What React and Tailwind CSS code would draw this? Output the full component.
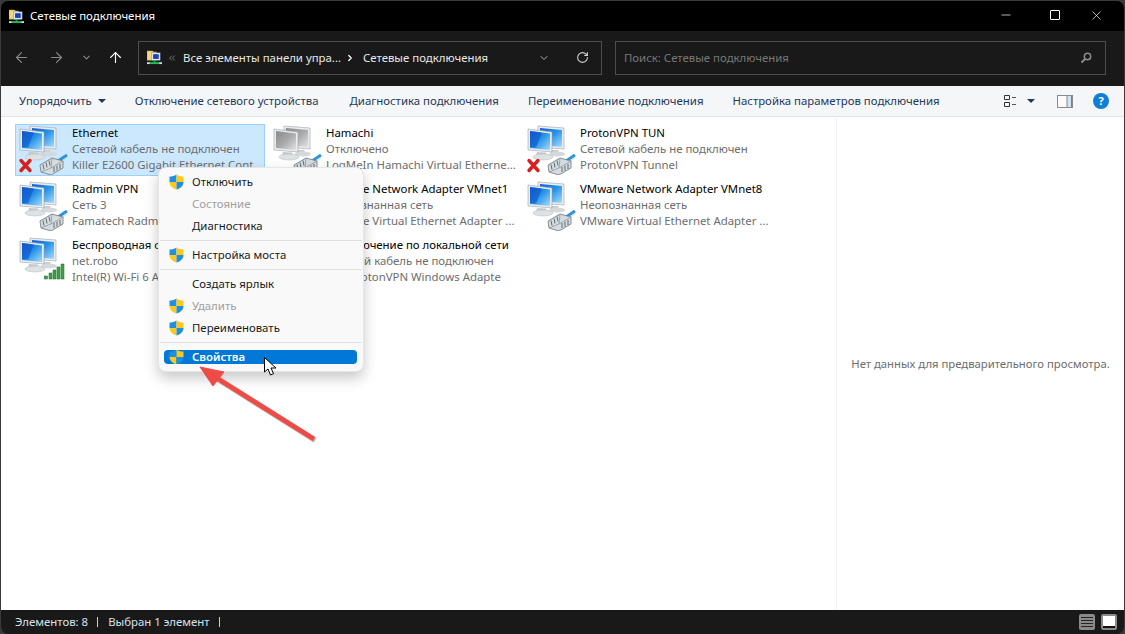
import React from 'react';
import { ArrowLeft, ArrowRight, ArrowUp, ChevronDown, ChevronRight, ChevronsLeft, RotateCw, Minus, X } from 'lucide-react';

const items = [
  { name: 'Ethernet', status: 'Сетевой кабель не подключен', device: 'Killer E2600 Gigabit Ethernet Cont...', badge: 'x', selected: true },
  { name: 'Hamachi', status: 'Отключено', device: 'LogMeIn Hamachi Virtual Etherne...', badge: 'cable', gray: true },
  { name: 'ProtonVPN TUN', status: 'Сетевой кабель не подключен', device: 'ProtonVPN Tunnel', badge: 'x' },
  { name: 'Radmin VPN', status: 'Сеть 3', device: 'Famatech Radmin VPN Ethernet Ad...', badge: 'plain' },
  { name: 'VMware Network Adapter VMnet1', status: 'Неопознанная сеть', device: 'VMware Virtual Ethernet Adapter ...', badge: 'plain' },
  { name: 'VMware Network Adapter VMnet8', status: 'Неопознанная сеть', device: 'VMware Virtual Ethernet Adapter ...', badge: 'plain' },
  { name: 'Беспроводная сеть', status: 'net.robo', device: 'Intel(R) Wi-Fi 6 AX201 160MHz', badge: 'wifi' },
  { name: 'Подключение по локальной сети', status: 'Сетевой кабель не подключен', device: 'TAP-ProtonVPN Windows Adapte', badge: 'x' },
];

const menu = [
  { label: 'Отключить', shield: true },
  { label: 'Состояние', disabled: true },
  { label: 'Диагностика' },
  { sep: true },
  { label: 'Настройка моста', shield: true },
  { sep: true },
  { label: 'Создать ярлык' },
  { label: 'Удалить', shield: true, disabled: true },
  { label: 'Переименовать', shield: true },
  { sep: true },
  { label: 'Свойства', shield: true, active: true },
];

function Monitor({ points, screen, fill }) {
  return (
    <g>
      <polygon points={points} fill="#e9edf0" stroke="#9aa3a8" strokeWidth="0.6" />
      <polygon points={screen} fill={fill} />
    </g>
  );
}

function CableBadge() {
  return (
    <g>
      <path d="M42 36l9-6" stroke="#2f93d6" strokeWidth="3" />
      <path d="M44 38l7-5" stroke="#bfe3f7" strokeWidth="1" />
      <path d="M24 40l12-7 11 3v7l-12 7-10-3z" fill="#d5dce0" stroke="#77848b" strokeWidth="0.9" strokeLinejoin="round" />
      <path d="M36 33l-1 10-10 4M35 43l12-7" fill="none" stroke="#8b979d" strokeWidth="0.8" />
      <path d="M27 39.500l1 5M30 37.500l1 5M33 35.500l1 5M38 42v5M41 40.500v5M44 39v5" stroke="#5f6c73" strokeWidth="1" />
    </g>
  );
}

function NetIcon({ badge, gray }) {
  const id = gray ? 'screenGray' : 'screenBlue';
  return (
    <svg width="52" height="50" viewBox="0 0 52 50" className="shrink-0">
      <defs>
        <linearGradient id="screenBlue" x1="0" y1="0" x2="1" y2="1">
          <stop offset="0" stopColor="#1a5fd0" />
          <stop offset="0.45" stopColor="#1f8fe8" />
          <stop offset="1" stopColor="#a5dcf8" />
        </linearGradient>
        <linearGradient id="screenGray" x1="0" y1="0" x2="1" y2="1">
          <stop offset="0" stopColor="#8a8a8a" />
          <stop offset="0.5" stopColor="#a8a8a8" />
          <stop offset="1" stopColor="#e2e2e2" />
        </linearGradient>
      </defs>
      <Monitor points="14,1 40,3 40,24 14,22" screen="16,3 38,5 38,22 16,20" fill={`url(#${id})`} />
      <path d="M27 25l7 0 2 4-9 0z" fill="#c9ced1" />
      <ellipse cx="33" cy="29" rx="8" ry="2.500" fill="#d5d9db" />
      <Monitor points="4,4 28,7 28,27 4,25" screen="6,6 26,8.500 26,25 6,23" fill={`url(#${id})`} />
      <path d="M6 6l12 1.500-6 15-6-.5z" fill="#0f4fc4" opacity={gray ? 0 : 0.55} />
      <path d="M13 27l9 .5 1 3-11 0z" fill="#c4cacd" />
      <ellipse cx="19" cy="32" rx="10" ry="3" fill="#dde1e3" stroke="#b4babd" strokeWidth="0.5" />
      {badge === 'x' && (
        <>
          <CableBadge />
          <path d="M5 35.500l9 10M14 35.500l-9 10" stroke="#d81e1e" strokeWidth="3.400" strokeLinecap="round" />
        </>
      )}
      {(badge === 'cable' || badge === 'plain') && <CableBadge />}
      {badge === 'wifi' && (
        <g fill="#3fa14a" stroke="#1e6b2a" strokeWidth="0.5">
          <rect x="28.500" y="39" width="3" height="3" />
          <rect x="33" y="36" width="3" height="6" />
          <rect x="37" y="33" width="3" height="9" />
          <rect x="41" y="30" width="3" height="12" />
          <rect x="45" y="27" width="3" height="15" />
        </g>
      )}
    </svg>
  );
}

function Shield() {
  return (
    <svg width="15" height="16" viewBox="0 0 15 16" className="shrink-0">
      <path d="M7.500 0.500C5.500 2 3 2.500 0.500 2.500V8h7z" fill="#1f8fe0" />
      <path d="M7.500 0.500C9.500 2 12 2.500 14.500 2.500V8h-7z" fill="#fbc81e" />
      <path d="M0.500 8c0 3.500 3 6.500 7 7.500V8z" fill="#fbc81e" />
      <path d="M14.500 8c0 3.500-3 6.500-7 7.500V8z" fill="#1f8fe0" />
    </svg>
  );
}

function AppIcon() {
  return (
    <svg width="15" height="15" viewBox="0 0 16 16" className="shrink-0">
      <path d="M0 1h6l1 1h3v9H0z" fill="#f3d77c" stroke="#b79a45" strokeWidth="0.5" />
      <rect x="5" y="3" width="9" height="8" fill="#dfe6f5" stroke="#6f7fb0" strokeWidth="0.5" />
      <rect x="6.500" y="4.500" width="6" height="5" fill="#1c3fb0" />
      <rect x="7" y="11" width="2" height="2" fill="#16a34a" />
      <rect x="3" y="13" width="10" height="2" fill="#22c05a" />
      <rect x="0" y="13" width="3" height="2" fill="#d8d8d8" />
      <rect x="13" y="13" width="3" height="2" fill="#d8d8d8" />
    </svg>
  );
}

function ListItem({ item }) {
  return (
    <div
      className={`flex h-[52px] w-[250px] border ${
        item.selected ? 'border-[#99d1ff] bg-[#cce8ff]' : 'border-transparent'
      }`}
    >
      <div className="w-[56px] shrink-0">
        <NetIcon badge={item.badge} gray={item.gray} />
      </div>
      <div className="min-w-0 text-[11.4px] leading-[16px] whitespace-nowrap">
        <div className="text-black">{item.name}</div>
        <div className="text-[#6d6d6d]">{item.status}</div>
        <div className="text-[#6d6d6d]">{item.device}</div>
      </div>
    </div>
  );
}

function ContextMenu() {
  return (
    <div className="absolute left-[158px] top-[167px] w-[206px] rounded-lg border border-[#e6e6e6] bg-[#f9f9f9] py-[3px] shadow-[0_6px_14px_rgba(0,0,0,0.22)] text-[11.4px]">
      {menu.map((m, i) => {
        if (m.sep) return <div key={i} className="mx-[1px] my-[3px] h-px bg-[#e0e0e0]" />;
        if (m.active) {
          return (
            <div key={i} className="mb-[4px] ml-[5px] mr-[6px] mt-[7px] flex h-[14px] items-center overflow-hidden rounded-[4px] bg-[#0078d7] pl-[5px] font-semibold text-white">
              <Shield />
              <span className="ml-[8px]">{m.label}</span>
            </div>
          );
        }
        return (
          <div key={i} className={`flex h-[22px] items-center pl-[10px] ${m.disabled ? 'text-[#a0a0a0]' : 'text-[#1a1a1a]'}`}>
            <div className="w-[23px]">{m.shield && <Shield />}</div>
            <span>{m.label}</span>
          </div>
        );
      })}
    </div>
  );
}

export default function App() {
  return (
    <div className="relative h-[634px] w-[1125px] overflow-hidden bg-[#3a3a3a] font-['Noto_Sans',sans-serif]">
      <div className="flex h-full flex-col overflow-hidden rounded-[8px] border-x border-t border-[#3a3a3a]">
        {/* title bar */}
        <div className="flex h-[30px] shrink-0 items-center bg-black pl-[8px] text-white">
          <AppIcon />
          <span className="ml-[6px] text-[11.4px]">Сетевые подключения</span>
          <div className="mb-[2px] ml-auto flex items-center pr-[20px]">
            <Minus size={14} strokeWidth={1.2} className="mr-[37px]" />
            <div className="mr-[29px] h-[10px] w-[10px] rounded-[1px] border border-white" />
            <X size={15} strokeWidth={1.1} />
          </div>
        </div>

        {/* address row */}
        <div className="flex h-[55px] shrink-0 items-center bg-[#191919] pb-[2px]">
          <div className="flex w-[137px] items-center pl-[12px]">
            <ArrowLeft size={17} strokeWidth={1.6} className="text-[#8a8a8a]" />
            <ArrowRight size={17} strokeWidth={1.6} className="ml-[18px] text-[#8a8a8a]" />
            <ChevronDown size={11} strokeWidth={2.4} className="ml-[16px] text-[#8a8a8a]" />
            <ArrowUp size={17} strokeWidth={1.6} className="ml-[15px] text-white" />
          </div>
          <div className="flex h-[34px] w-[464px] items-center border border-[#4d4d4d] pl-[8px] text-[11.4px] text-[#e8e8e8]">
            <AppIcon />
            <ChevronsLeft size={10} className="ml-[5px] text-[#8a8a8a]" />
            <span className="ml-[6px]">Все элементы панели упра...</span>
            <ChevronRight size={10} strokeWidth={3} className="ml-[4px] text-white" />
            <span className="ml-[8px]">Сетевые подключения</span>
            <ChevronDown size={12} className="ml-auto text-[#b0b0b0]" />
            <RotateCw size={13} className="ml-[26px] mr-[12px] text-[#d0d0d0]" />
          </div>
          <div className="ml-[13px] flex h-[34px] w-[491px] items-center justify-between border border-[#4d4d4d] pl-[8px] pr-[13px] text-[11.4px] text-[#777777]">
            <span>Поиск: Сетевые подключения</span>
            <svg width="12" height="12" viewBox="0 0 12 12">
              <circle cx="7.500" cy="4.500" r="3.200" fill="none" stroke="#8a8a8a" strokeWidth="1.500" />
              <path d="M5 7L1.500 10.500" stroke="#8a8a8a" strokeWidth="2" />
            </svg>
          </div>
        </div>

        {/* toolbar */}
        <div className="flex h-[31px] shrink-0 items-center border-b border-[#e3e5e8] bg-[#f5f6f7] pl-[18px] text-[11.4px] text-[#1e395b]">
          <span>Упорядочить</span>
          <span className="ml-[6px] h-0 w-0 border-x-[4px] border-t-[4px] border-x-transparent border-t-[#1e395b]" />
          <span className="ml-[29px]">Отключение сетевого устройства</span>
          <span className="ml-[31px]">Диагностика подключения</span>
          <span className="ml-[29px]">Переименование подключения</span>
          <span className="ml-[29px]">Настройка параметров подключения</span>
          <div className="ml-auto flex items-center pr-[15px]">
            <svg width="14" height="14" viewBox="0 0 14 14">
              <path d="M1.500 1.500h5v4h-5zM1.500 8.500h5v4h-5z" fill="none" stroke="#333" />
              <path d="M9 3.500h4M9 10.500h4" stroke="#555" />
            </svg>
            <span className="ml-[10px] h-0 w-0 border-x-[4px] border-t-[4px] border-x-transparent border-t-[#1e395b]" />
            <svg width="16" height="13" viewBox="0 0 16 13" className="ml-[22px]">
              <rect x="0.500" y="0.500" width="15" height="12" fill="#fafafa" stroke="#8a8a8a" />
              <rect x="10" y="1" width="4" height="11" fill="#cfe3f5" />
              <path d="M10 1v11" stroke="#8a8a8a" />
              <path d="M14.500 1v11" stroke="#3a8fd8" />
            </svg>
            <div className="ml-[20px] flex h-[16px] w-[16px] items-center justify-center rounded-full bg-[#0f7fd6] text-[11px] font-bold text-white">?</div>
          </div>
        </div>

        {/* content */}
        <div className="flex min-h-0 flex-1 bg-white">
          <div className="w-[835px] shrink-0 pl-[14px] pt-[7px]">
            <div className="grid grid-cols-[254px_254px_254px] gap-y-[4px]">
              {items.map((item) => (
                <ListItem key={item.name + item.device} item={item} />
              ))}
            </div>
          </div>
          <div className="flex flex-1 items-center justify-center border-l border-[#f0f0f0] pt-[1px] text-[11.3px] text-[#6d6d6d]">
            Нет данных для предварительного просмотра.
          </div>
        </div>

        {/* status bar */}
        <div className="flex h-[24px] shrink-0 items-center bg-[#191919] pl-[14px] pr-[7px] text-[11.4px] text-[#d6e2f0]">
          <span>Элементов: 8</span>
          <span className="ml-[9px] h-[10px] w-px bg-[#d0d0d0]" />
          <span className="ml-[10px]">Выбран 1 элемент</span>
          <span className="ml-[9px] h-[10px] w-px bg-[#d0d0d0]" />
          <div className="ml-auto flex items-center gap-[6px]">
            <div className="flex h-[16px] w-[16px] flex-col justify-center gap-[2px] rounded-[2px] bg-[#8a8a8a] px-[2px]">
              <div className="h-px bg-[#222]" />
              <div className="h-px bg-[#222]" />
              <div className="h-px bg-[#222]" />
              <div className="h-px bg-[#222]" />
            </div>
            <div className="flex h-[16px] w-[16px] items-center justify-center rounded-[2px] bg-[#8a8a8a]">
              <div className="h-[12px] w-[12px] border-b-2 border-[#111] bg-white" />
            </div>
          </div>
        </div>
      </div>

      <ContextMenu />

      {/* annotation arrow */}
      <svg className="absolute left-[190px] top-[355px]" width="140" height="95" viewBox="190 355 140 95">
        <path d="M314 439L212 375" stroke="#8a6a68" strokeWidth="5" opacity="0.5" transform="translate(1 1.500)" />
        <path d="M314 439L212 375" stroke="#ee4b47" strokeWidth="5" strokeLinecap="butt" />
        <polygon points="200,367 224,372 213,386" fill="#ee4b47" stroke="#ee4b47" strokeWidth="1" strokeLinejoin="round" />
      </svg>

      {/* mouse cursor */}
      <svg className="absolute left-[263px] top-[356px]" width="16" height="22" viewBox="0 0 16 22">
        <path d="M1.500 1.500V16l3.500-3 2.500 6 3-1.300-2.500-5.700h5z" fill="#fff" stroke="#000" strokeWidth="1" strokeLinejoin="round" />
      </svg>
    </div>
  );
}
